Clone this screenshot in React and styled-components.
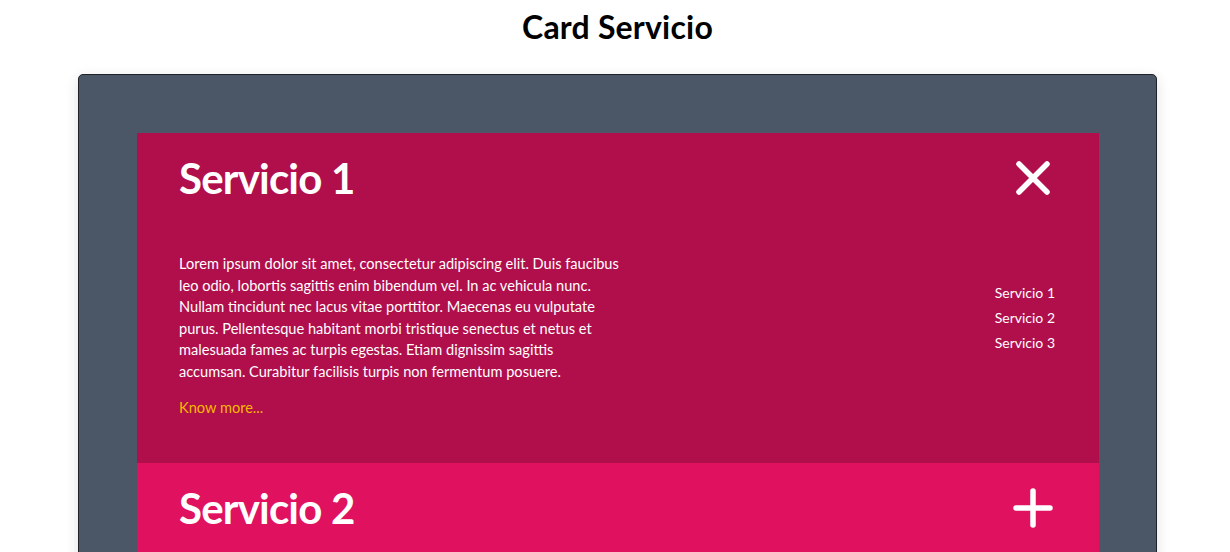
import React from 'react';
import styled, { createGlobalStyle } from 'styled-components';

const GlobalStyle = createGlobalStyle`
  body {
    margin: 0;
    background: #ffffff;
    font-family: "Lato", "Noto Sans", sans-serif;
  }
`;

const Page = styled.div`
  padding: 0 73px 0 78px;
`;

const Title = styled.h1`
  margin: 0;
  padding: 9px 0 29px;
  text-align: center;
  font-size: 32px;
  line-height: 36px;
  font-weight: 700;
  color: #000;
  letter-spacing: 0.2px;
`;

const Card = styled.div`
  background: #4b5767;
  border: 1px solid #1f2329;
  border-radius: 5px;
  padding: 58px 57px 58px 58px;
  box-shadow: 0 4px 14px rgba(0, 0, 0, 0.12);
`;

const Panel = styled.section`
  background: ${p => (p.open ? '#b10e4c' : '#e0115f')};
  color: #fff;
`;

const PanelHeader = styled.div`
  display: flex;
  align-items: center;
  justify-content: space-between;
  padding: 20px 46px 24px 42px;
`;

const PanelTitle = styled.h2`
  margin: 0;
  font-size: 42px;
  line-height: 50px;
  font-weight: 700;
  letter-spacing: -0.8px;
`;

const Body = styled.div`
  padding: 26px 44px 44px 42px;
`;

const Row = styled.div`
  display: flex;
  align-items: center;
  justify-content: space-between;
`;

const Text = styled.p`
  margin: 0;
  width: 442px;
  font-size: 14.6px;
  line-height: 21.6px;
`;

const List = styled.ul`
  margin: 0;
  padding: 0;
  list-style: none;
  text-align: right;
  font-size: 14px;
  line-height: 25px;
`;

const More = styled.a`
  display: block;
  margin-top: 14px;
  color: #f5b800;
  font-size: 14.6px;
  line-height: 22px;
  text-decoration: none;
`;

const Icon = ({ open }) => (
  <svg width="40" height="40" viewBox="0 0 40 40" fill="none" stroke="#fff" strokeWidth="5.5" strokeLinecap="round">
    {open ? (
      <path d="M6 6 L34 34 M34 6 L6 34" />
    ) : (
      <path d="M20 3 V37 M3 20 H37" />
    )}
  </svg>
);

const App = () => (
  <Page>
    <GlobalStyle />
    <Title>Card Servicio</Title>
    <Card>
      <Panel open>
        <PanelHeader>
          <PanelTitle>Servicio 1</PanelTitle>
          <Icon open />
        </PanelHeader>
        <Body>
          <Row>
            <Text>
              Lorem ipsum dolor sit amet, consectetur adipiscing elit. Duis faucibus leo odio, lobortis sagittis enim bibendum vel. In ac vehicula nunc. Nullam tincidunt nec lacus vitae porttitor. Maecenas eu vulputate purus. Pellentesque habitant morbi tristique senectus et netus et malesuada fames ac turpis egestas. Etiam dignissim sagittis accumsan. Curabitur facilisis turpis non fermentum posuere.
            </Text>
            <List>
              <li>Servicio 1</li>
              <li>Servicio 2</li>
              <li>Servicio 3</li>
            </List>
          </Row>
          <More href="#">Know more...</More>
        </Body>
      </Panel>
      <Panel>
        <PanelHeader>
          <PanelTitle>Servicio 2</PanelTitle>
          <Icon />
        </PanelHeader>
      </Panel>
    </Card>
  </Page>
);

export default App;
